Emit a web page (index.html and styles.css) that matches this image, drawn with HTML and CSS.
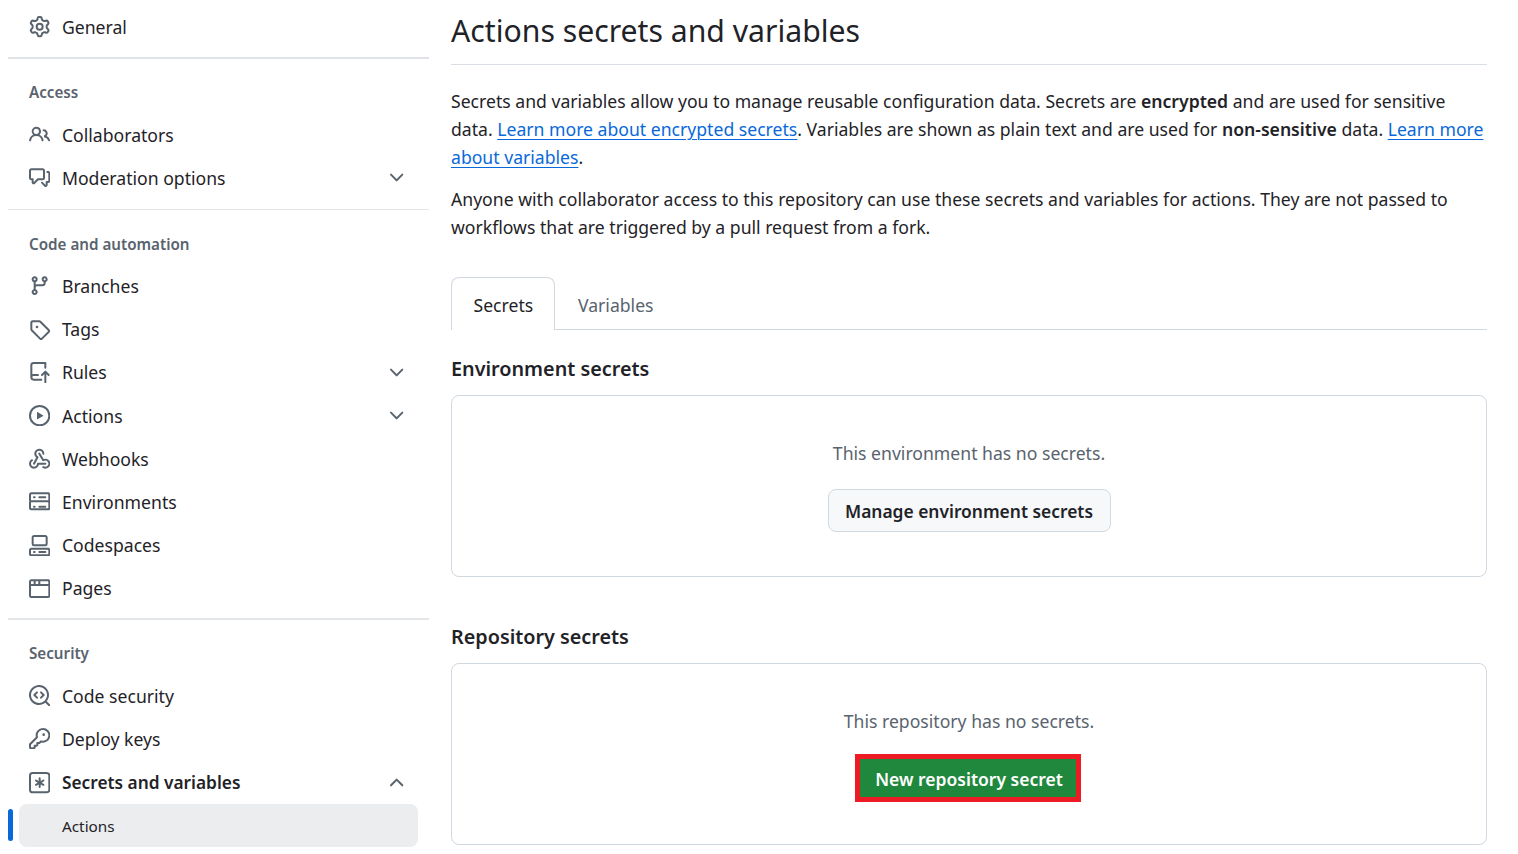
FILE: index.html
```html
<!DOCTYPE html>
<html lang="en">
<head>
  <meta charset="UTF-8" />
  <title>Actions secrets and variables</title>
  <link rel="stylesheet" href="styles.css">
</head>
<body>
  <div class="page">
    <nav class="sidebar">
      <a class="row"><svg class="icon" viewBox="0 0 16 16"><path d="M8 0a8.2 8.2 0 0 1 .701.031C9.444.095 9.99.645 10.16 1.29l.288 1.107c.018.066.079.158.212.224.231.114.454.243.668.386.123.082.233.09.299.071l1.103-.303c.644-.176 1.392.021 1.82.63.27.385.506.792.704 1.218.315.675.111 1.422-.364 1.891l-.814.806c-.049.048-.098.147-.088.294.016.257.016.515 0 .772-.01.147.038.246.088.294l.814.806c.475.469.679 1.216.364 1.891a7.977 7.977 0 0 1-.704 1.217c-.428.61-1.176.807-1.82.63l-1.102-.302c-.067-.019-.177-.011-.3.071a5.909 5.909 0 0 1-.668.386c-.133.066-.194.158-.211.224l-.29 1.106c-.168.646-.715 1.196-1.458 1.26a8.006 8.006 0 0 1-1.402 0c-.743-.064-1.289-.614-1.458-1.26l-.289-1.106c-.018-.066-.079-.158-.212-.224a5.738 5.738 0 0 1-.668-.386c-.123-.082-.233-.09-.299-.071l-1.103.303c-.644.176-1.392-.021-1.82-.63a8.12 8.12 0 0 1-.704-1.218c-.315-.675-.111-1.422.363-1.891l.815-.806c.05-.048.098-.147.088-.294a6.214 6.214 0 0 1 0-.772c.01-.147-.038-.246-.088-.294l-.815-.806C.635 6.045.431 5.298.746 4.623a7.92 7.92 0 0 1 .704-1.217c.428-.61 1.176-.807 1.82-.63l1.102.302c.067.019.177.011.3-.071.214-.143.437-.272.668-.386.133-.066.194-.158.211-.224l.29-1.106C6.009.645 6.556.095 7.299.03 7.53.01 7.764 0 8 0Zm-.571 1.525c-.036.003-.108.036-.137.146l-.289 1.105c-.147.561-.549.967-.998 1.189-.173.086-.34.183-.5.29-.417.278-.97.423-1.529.27l-1.103-.303c-.109-.03-.175.016-.195.045-.22.312-.412.644-.573.99-.014.031-.021.11.059.19l.815.806c.411.406.562.957.53 1.456a4.709 4.709 0 0 0 0 .582c.032.499-.119 1.05-.53 1.456l-.815.806c-.081.08-.073.159-.059.19.162.346.353.677.573.989.02.03.085.076.195.046l1.102-.303c.56-.153 1.113-.008 1.53.27.161.107.328.204.501.29.447.222.85.629.997 1.189l.289 1.105c.029.109.101.143.137.146a6.6 6.6 0 0 0 1.142 0c.036-.003.108-.036.137-.146l.289-1.105c.147-.561.549-.967.998-1.189.173-.086.34-.183.5-.29.417-.278.97-.423 1.529-.27l1.103.303c.109.029.175-.016.195-.045.22-.313.411-.644.573-.99.014-.031.021-.11-.059-.19l-.815-.806c-.411-.406-.562-.957-.53-1.456a4.709 4.709 0 0 0 0-.582c-.032-.499.119-1.05.53-1.456l.815-.806c.081-.08.073-.159.059-.19a6.464 6.464 0 0 0-.573-.989c-.02-.03-.085-.076-.195-.046l-1.102.303c-.56.153-1.113.008-1.53-.27a4.44 4.44 0 0 0-.501-.29c-.447-.222-.85-.629-.997-1.189l-.289-1.105c-.029-.11-.101-.143-.137-.146a6.6 6.6 0 0 0-1.142 0ZM11 8a3 3 0 1 1-6 0 3 3 0 0 1 6 0ZM9.5 8a1.5 1.5 0 1 0-3.001.001A1.5 1.5 0 0 0 9.5 8Z"/></svg>General</a>
      <hr class="divider divider-thick">

      <div class="row heading">Access</div>
      <a class="row"><svg class="icon" viewBox="0 0 16 16"><path d="M2 5.5a3.5 3.5 0 1 1 5.898 2.549 5.508 5.508 0 0 1 3.034 4.084.75.75 0 1 1-1.482.235 4 4 0 0 0-7.9 0 .75.75 0 0 1-1.482-.236A5.507 5.507 0 0 1 3.102 8.05 3.493 3.493 0 0 1 2 5.5ZM11 4a3.001 3.001 0 0 1 2.22 5.018 5.01 5.01 0 0 1 2.56 3.012.749.749 0 0 1-.885.954.752.752 0 0 1-.549-.514 3.507 3.507 0 0 0-2.522-2.372.75.75 0 0 1-.574-.73v-.352a.75.75 0 0 1 .416-.672A1.5 1.5 0 0 0 11 5.5.75.75 0 0 1 11 4Zm-5.5-.5a2 2 0 1 0-.001 3.999A2 2 0 0 0 5.5 3.5Z"/></svg>Collaborators</a>
      <a class="row"><svg class="icon" viewBox="0 0 16 16"><path d="M1.75 1h8.5c.966 0 1.75.784 1.75 1.75v5.5A1.75 1.75 0 0 1 10.25 10H7.061l-2.574 2.573A1.458 1.458 0 0 1 2 11.543V10h-.25A1.75 1.75 0 0 1 0 8.25v-5.5C0 1.784.784 1 1.75 1ZM1.5 2.75v5.5c0 .138.112.25.25.25h1a.75.75 0 0 1 .75.75v2.19l2.72-2.72a.749.749 0 0 1 .53-.22h3.5a.25.25 0 0 0 .25-.25v-5.5a.25.25 0 0 0-.25-.25h-8.5a.25.25 0 0 0-.25.25Zm13 2a.25.25 0 0 0-.25-.25h-.5a.75.75 0 0 1 0-1.5h.5c.966 0 1.75.784 1.75 1.75v5.5A1.75 1.75 0 0 1 14.25 12H14v1.543a1.458 1.458 0 0 1-2.487 1.03L9.22 12.28a.749.749 0 0 1 .326-1.275.749.749 0 0 1 .734.215l2.22 2.22v-2.19a.75.75 0 0 1 .75-.75h1a.25.25 0 0 0 .25-.25Z"/></svg>Moderation options<svg class="icon chevron" viewBox="0 0 16 16"><path d="M12.78 5.22a.749.749 0 0 1 0 1.06l-4.25 4.25a.749.749 0 0 1-1.06 0L3.22 6.28a.749.749 0 1 1 1.06-1.06L8 8.939l3.72-3.719a.749.749 0 0 1 1.06 0Z"/></svg></a>
      <hr class="divider divider-mid">

      <div class="row heading">Code and automation</div>
      <a class="row"><svg class="icon" viewBox="0 0 16 16"><path d="M9.5 3.25a2.25 2.25 0 1 1 3 2.122V6A2.5 2.5 0 0 1 10 8.5H6a1 1 0 0 0-1 1v1.128a2.251 2.251 0 1 1-1.5 0V5.372a2.25 2.25 0 1 1 1.5 0v1.836A2.493 2.493 0 0 1 6 7h4a1 1 0 0 0 1-1v-.628A2.25 2.25 0 0 1 9.5 3.25Zm-6 0a.75.75 0 1 0 1.5 0 .75.75 0 0 0-1.5 0Zm8.25-.75a.75.75 0 1 0 0 1.5.75.75 0 0 0 0-1.5ZM4.25 12a.75.75 0 1 0 0 1.5.75.75 0 0 0 0-1.5Z"/></svg>Branches</a>
      <a class="row"><svg class="icon" viewBox="0 0 16 16"><path d="M1 7.775V2.75C1 1.784 1.784 1 2.75 1h5.025c.464 0 .91.184 1.238.513l6.25 6.25a1.75 1.75 0 0 1 0 2.474l-5.026 5.026a1.75 1.75 0 0 1-2.474 0l-6.25-6.25A1.752 1.752 0 0 1 1 7.775Zm1.5 0c0 .066.026.13.073.177l6.25 6.25a.25.25 0 0 0 .354 0l5.025-5.025a.25.25 0 0 0 0-.354l-6.25-6.25a.25.25 0 0 0-.177-.073H2.75a.25.25 0 0 0-.25.25ZM6 5a1 1 0 1 1 0 2 1 1 0 0 1 0-2Z"/></svg>Tags</a>
      <a class="row"><svg class="icon" viewBox="0 0 16 16"><path d="M1 2.5A2.5 2.5 0 0 1 3.5 0h8.75a.75.75 0 0 1 .75.75v3.5a.75.75 0 0 1-1.5 0V1.5h-8a1 1 0 0 0-1 1v6.708A2.493 2.493 0 0 1 3.5 9h3.25a.75.75 0 0 1 0 1.5H3.5a1 1 0 0 0 0 2h5.75a.75.75 0 0 1 0 1.5H3.5A2.5 2.5 0 0 1 1 11.5Zm13.23 7.79h-.001l-1.224-1.224v6.184a.75.75 0 0 1-1.5 0V9.066L10.28 10.29a.75.75 0 0 1-1.06-1.061l2.505-2.504a.75.75 0 0 1 1.06 0L15.29 9.23a.751.751 0 0 1-.018 1.042.751.751 0 0 1-1.042.018Z"/></svg>Rules<svg class="icon chevron" viewBox="0 0 16 16"><path d="M12.78 5.22a.749.749 0 0 1 0 1.06l-4.25 4.25a.749.749 0 0 1-1.06 0L3.22 6.28a.749.749 0 1 1 1.06-1.06L8 8.939l3.72-3.719a.749.749 0 0 1 1.06 0Z"/></svg></a>
      <a class="row"><svg class="icon" viewBox="0 0 16 16"><path d="M8 0a8 8 0 1 1 0 16A8 8 0 0 1 8 0ZM1.5 8a6.5 6.5 0 1 0 13 0 6.5 6.5 0 0 0-13 0Zm4.879-2.773 4.264 2.559a.25.25 0 0 1 0 .428l-4.264 2.559A.25.25 0 0 1 6 10.559V5.442a.25.25 0 0 1 .379-.215Z"/></svg>Actions<svg class="icon chevron" viewBox="0 0 16 16"><path d="M12.78 5.22a.749.749 0 0 1 0 1.06l-4.25 4.25a.749.749 0 0 1-1.06 0L3.22 6.28a.749.749 0 1 1 1.06-1.06L8 8.939l3.72-3.719a.749.749 0 0 1 1.06 0Z"/></svg></a>
      <a class="row"><svg class="icon" viewBox="0 0 16 16"><path d="M5.5 4.25a2.25 2.25 0 0 1 4.5 0 .75.75 0 0 0 1.5 0 3.75 3.75 0 1 0-6.14 2.889l-2.272 4.258a.75.75 0 0 0 1.324.706L7 7.25a.75.75 0 0 0-.309-1.015A2.25 2.25 0 0 1 5.5 4.25Z"/><path d="M7.364 3.607a.75.75 0 0 1 1.03.257l2.608 4.349a3.75 3.75 0 1 1-.628 6.785.75.75 0 0 1 .752-1.299 2.25 2.25 0 1 0-.033-3.88.75.75 0 0 1-1.03-.256L7.107 4.636a.75.75 0 0 1 .257-1.03Z"/><path d="M2.9 8.776A.75.75 0 0 1 2.625 9.8 2.25 2.25 0 1 0 6 11.75a.75.75 0 0 1 .75-.751h5.5a.75.75 0 0 1 0 1.5H7.425a3.751 3.751 0 1 1-5.55-3.998.75.75 0 0 1 1.024.274Z"/></svg>Webhooks</a>
      <a class="row"><svg class="icon" viewBox="0 0 16 16"><path d="M1.75 1h12.5c.966 0 1.75.784 1.75 1.75v4c0 .372-.116.717-.314 1 .198.283.314.628.314 1v4a1.75 1.75 0 0 1-1.75 1.75H1.75A1.75 1.75 0 0 1 0 12.75v-4c0-.372.116-.717.314-1a1.739 1.739 0 0 1-.314-1v-4C0 1.784.784 1 1.75 1ZM1.5 2.75v4c0 .138.112.25.25.25h12.5a.25.25 0 0 0 .25-.25v-4a.25.25 0 0 0-.25-.25H1.75a.25.25 0 0 0-.25.25Zm.25 5.75a.25.25 0 0 0-.25.25v4c0 .138.112.25.25.25h12.5a.25.25 0 0 0 .25-.25v-4a.25.25 0 0 0-.25-.25ZM7 4.75A.75.75 0 0 1 7.75 4h4.5a.75.75 0 0 1 0 1.5h-4.5A.75.75 0 0 1 7 4.75Zm.75 6.25h4.5a.75.75 0 0 1 0 1.5h-4.5a.75.75 0 0 1 0-1.5ZM3 4.75A.75.75 0 0 1 3.75 4h.5a.75.75 0 0 1 0 1.5h-.5A.75.75 0 0 1 3 4.75ZM3.75 11h.5a.75.75 0 0 1 0 1.5h-.5a.75.75 0 0 1 0-1.5Z"/></svg>Environments</a>
      <a class="row"><svg class="icon" viewBox="0 0 16 16"><path d="M0 11.25c0-.966.784-1.75 1.75-1.75h12.5c.966 0 1.75.784 1.75 1.75v3A1.75 1.75 0 0 1 14.25 16H1.75A1.75 1.75 0 0 1 0 14.25Zm2-9.5C2 .784 2.784 0 3.75 0h8.5C13.216 0 14 .784 14 1.75v5a1.75 1.75 0 0 1-1.75 1.75h-8.5A1.75 1.75 0 0 1 2 6.75Zm1.75-.25a.25.25 0 0 0-.25.25v5c0 .138.112.25.25.25h8.5a.25.25 0 0 0 .25-.25v-5a.25.25 0 0 0-.25-.25Zm-2 9.5a.25.25 0 0 0-.25.25v3c0 .138.112.25.25.25h12.5a.25.25 0 0 0 .25-.25v-3a.25.25 0 0 0-.25-.25Z"/><path d="M7 12.75a.75.75 0 0 1 .75-.75h4.5a.75.75 0 0 1 0 1.5h-4.5a.75.75 0 0 1-.75-.75Zm-4 0a.75.75 0 0 1 .75-.75h.5a.75.75 0 0 1 0 1.5h-.5a.75.75 0 0 1-.75-.75Z"/></svg>Codespaces</a>
      <a class="row"><svg class="icon" viewBox="0 0 16 16"><path d="M0 2.75C0 1.784.784 1 1.75 1h12.5c.966 0 1.75.784 1.75 1.75v10.5A1.75 1.75 0 0 1 14.25 15H1.75A1.75 1.75 0 0 1 0 13.25ZM14.5 6h-13v7.25c0 .138.112.25.25.25h12.5a.25.25 0 0 0 .25-.25Zm-6-3.5v2h6V2.75a.25.25 0 0 0-.25-.25ZM5 2.5v2h2v-2Zm-3.25 0a.25.25 0 0 0-.25.25V4.5h2v-2Z"/></svg>Pages</a>
      <hr class="divider divider-last">

      <div class="row heading">Security</div>
      <a class="row"><svg class="icon" viewBox="0 0 16 16"><path d="M8.47 4.97a.75.75 0 0 0 0 1.06L9.94 7.5 8.47 8.97a.75.75 0 1 0 1.06 1.06l2-2a.75.75 0 0 0 0-1.06l-2-2a.75.75 0 0 0-1.06 0ZM6.53 6.03a.75.75 0 0 0-1.06-1.06l-2 2a.75.75 0 0 0 0 1.06l2 2a.75.75 0 1 0 1.06-1.06L5.06 7.5l1.47-1.47Z"/><path d="M12.246 13.307a7.501 7.501 0 1 1 1.06-1.06l2.474 2.473a.749.749 0 0 1-.326 1.275.749.749 0 0 1-.734-.215ZM1.5 7.5a6.002 6.002 0 0 0 3.608 5.504 6.002 6.002 0 0 0 6.486-1.117.748.748 0 0 1 .292-.293A6 6 0 1 0 1.5 7.5Z"/></svg>Code security</a>
      <a class="row"><svg class="icon" viewBox="0 0 16 16"><path d="M10.5 0a5.499 5.499 0 1 1-1.288 10.848l-.932.932a.749.749 0 0 1-.53.22H7v.75a.749.749 0 0 1-.22.53l-.5.5a.749.749 0 0 1-.53.22H5v.75a.749.749 0 0 1-.22.53l-.5.5a.749.749 0 0 1-.53.22h-2A1.75 1.75 0 0 1 0 14.25v-2c0-.199.079-.389.22-.53l4.932-4.932A5.5 5.5 0 0 1 10.5 0Zm-4 5.5c-.001.431.069.86.205 1.269a.75.75 0 0 1-.181.768L1.5 12.56v1.69c0 .138.112.25.25.25h1.69l.06-.06v-1.19a.75.75 0 0 1 .75-.75h1.19l.06-.06v-1.19a.75.75 0 0 1 .75-.75h1.19l1.023-1.025a.75.75 0 0 1 .768-.18A4 4 0 1 0 6.5 5.5ZM11 6a1 1 0 1 1 0-2 1 1 0 0 1 0 2Z"/></svg>Deploy keys</a>
      <a class="row row-open"><svg class="icon" viewBox="0 0 16 16"><path d="M0 2.75A2.75 2.75 0 0 1 2.75 0h10.5A2.75 2.75 0 0 1 16 2.75v10.5A2.75 2.75 0 0 1 13.25 16H2.75A2.75 2.75 0 0 1 0 13.25ZM2.75 1.5c-.69 0-1.25.56-1.25 1.25v10.5c0 .69.56 1.25 1.25 1.25h10.5c.69 0 1.25-.56 1.25-1.25V2.75c0-.69-.56-1.25-1.25-1.25Z"/><path d="M8 4a.75.75 0 0 1 .75.75V6.7l1.69-.975a.75.75 0 0 1 .75 1.3L9.5 8l1.69.976a.75.75 0 0 1-.75 1.298L8.75 9.299V11.25a.75.75 0 0 1-1.5 0V9.299l-1.69.975a.75.75 0 0 1-.75-1.298L6.5 8l-1.69-.975a.75.75 0 0 1 .75-1.3l1.69.976V4.75A.75.75 0 0 1 8 4Z"/></svg>Secrets and variables<svg class="icon chevron" viewBox="0 0 16 16"><path d="M3.22 10.53a.749.749 0 0 1 0-1.06l4.25-4.25a.749.749 0 0 1 1.06 0l4.25 4.25a.749.749 0 1 1-1.06 1.06L8 6.811 4.28 10.53a.749.749 0 0 1-1.06 0Z"/></svg></a>
      <a class="subrow">Actions</a>
    </nav>

    <main class="content">
      <h1 class="title">Actions secrets and variables</h1>
      <p class="text first">Secrets and variables allow you to manage reusable configuration data. Secrets are <b>encrypted</b> and are used for sensitive data. <a class="link">Learn more about encrypted secrets</a>. Variables are shown as plain text and are used for <b>non-sensitive</b> data. <a class="link">Learn more about variables</a>.</p>
      <p class="text">Anyone with collaborator access to this repository can use these secrets and variables for actions. They are not passed to workflows that are triggered by a pull request from a fork.</p>

      <div class="tabs">
        <a class="tab tab-active">Secrets</a>
        <a class="tab">Variables</a>
      </div>

      <h2 class="section-title">Environment secrets</h2>
      <div class="card">
        <p class="empty">This environment has no secrets.</p>
        <button class="btn">Manage environment secrets</button>
      </div>

      <h2 class="section-title repo-title">Repository secrets</h2>
      <div class="card">
        <p class="empty">This repository has no secrets.</p>
        <div class="highlight"><button class="btn-primary">New repository secret</button></div>
      </div>
    </main>
  </div>
</body>
</html>
```

FILE: styles.css
```css
* { box-sizing: border-box; }
body {
  margin: 0;
  background: #fff;
  color: #1f2328;
  font-family: "Noto Sans", "Open Sans", sans-serif;
  font-size: 17.63px;
}
.page {
  display: flex;
  height: 854px;
  overflow: hidden;
}

/* sidebar */
.sidebar {
  width: 421px;
  margin-left: 8px;
  padding-top: 5.4px;
  flex-shrink: 0;
}
.row {
  display: flex;
  align-items: center;
  height: 43.2px;
  padding: 0 22px 0 21px;
}
.icon {
  width: 21.33px;
  height: 21.33px;
  margin-right: 11.67px;
  fill: #59636e;
  flex-shrink: 0;
}
.chevron {
  margin: 0 0 0 auto;
}
.heading {
  padding-top: 2px;
  color: #59636e;
  font-size: 15.2px;
  font-weight: 600;
}
.divider {
  height: 1.4px;
  border: 0;
  background: #e3e6e9;
}
.divider-thick {
  height: 2px;
  margin: 8px 0 11.2px;
  background: #dfe3e7;
}
.divider-mid {
  margin: 9.2px 0 11.4px;
}
.divider-last {
  margin: 8.4px 0 11px;
}
.row-open {
  padding-top: 2px;
  font-size: 17.3px;
  font-weight: 600;
}
.subrow {
  position: relative;
  display: flex;
  align-items: center;
  height: 43px;
  margin: 0 11px;
  padding: 2px 0 0 43px;
  font-size: 15.3px;
  background: #ecedef;
  border-radius: 8px;
}
.subrow::before {
  content: "";
  position: absolute;
  left: -11px;
  top: 5px;
  width: 5px;
  height: 32px;
  background: #0969da;
  border-radius: 3px;
}

/* main column */
.content {
  width: 1036px;
  margin-left: 22px;
}
.title {
  height: 65px;
  margin: 0;
  font-size: 30.2px;
  font-weight: 400;
  line-height: 62px;
  border-bottom: 1px solid #d8dee4;
}
.text {
  margin: 14px 0 0;
  line-height: 28px;
}
.first {
  margin-top: 22px;
}
.text b {
  font-weight: 600;
}
.link {
  color: #0969da;
  text-decoration: underline;
  text-decoration-thickness: 1px;
  text-underline-offset: 3px;
}
.tabs {
  display: flex;
  height: 53px;
  margin-top: 36px;
  border-bottom: 1px solid #d1d9e0;
}
.tab {
  display: flex;
  align-items: center;
  height: 53px;
  padding: 2px 23px 0;
  color: #59636e;
}
.tab-active {
  width: 104px;
  padding: 1px 0 0 21.5px;
  color: #1f2328;
  background: #fff;
  border: 1px solid #d1d9e0;
  border-bottom: 0;
  border-radius: 8px 8px 0 0;
}
.section-title {
  margin: 25px 0 12px;
  font-size: 19.8px;
  font-weight: 600;
  line-height: 28px;
}
.repo-title {
  margin-top: 46px;
}
.card {
  display: flex;
  flex-direction: column;
  align-items: center;
  height: 182px;
  padding-top: 43px;
  border: 1px solid #d1d9e0;
  border-radius: 8px;
}
.empty {
  margin: 0;
  color: #59636e;
  line-height: 28px;
}
.btn {
  width: 283px;
  height: 43px;
  margin-top: 22px;
  color: #1f2328;
  font: 600 17.4px "Noto Sans", "Open Sans", sans-serif;
  background: #f6f8fa;
  border: 1px solid #d1d9e0;
  border-radius: 8px;
}
.highlight {
  margin: 19px 2px 0 0;
  border: 5px solid #ed1c24;
}
.btn-primary {
  display: block;
  width: 216px;
  height: 38px;
  padding: 2px 0 0 2px;
  color: #fff;
  font: 600 17.5px "Noto Sans", "Open Sans", sans-serif;
  background: #1f883d;
  border: 0;
}
```
